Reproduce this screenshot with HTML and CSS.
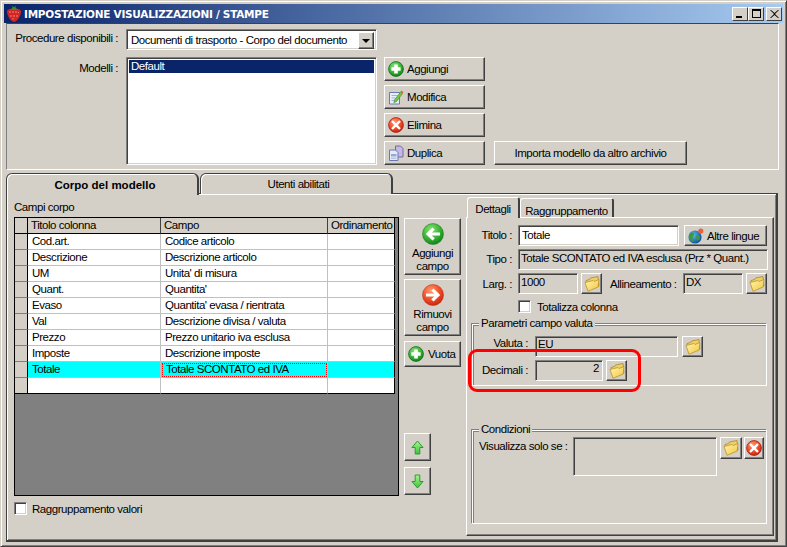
FILE: index.html
```html
<!DOCTYPE html>
<html lang="it">
<head>
<meta charset="utf-8">
<title>Impostazione visualizzazioni / stampe</title>
<link rel="stylesheet" href="styles.css">
</head>
<body>
<svg class="defs" width="0" height="0" aria-hidden="true">
  <defs>
    <radialGradient id="gg" cx="40%" cy="30%" r="75%"><stop offset="0" stop-color="#8fe07a"/><stop offset=".6" stop-color="#35b030"/><stop offset="1" stop-color="#0f7a1c"/></radialGradient>
    <radialGradient id="rg" cx="40%" cy="30%" r="75%"><stop offset="0" stop-color="#ff9a70"/><stop offset=".6" stop-color="#ee4a25"/><stop offset="1" stop-color="#c0200f"/></radialGradient>
    <linearGradient id="fg" x1="0" y1="0" x2="1" y2="1"><stop offset="0" stop-color="#fff6b0"/><stop offset="1" stop-color="#f2c63c"/></linearGradient>
    <linearGradient id="ag" x1="0" y1="0" x2="0" y2="1"><stop offset="0" stop-color="#a8f48c"/><stop offset="1" stop-color="#3cc43c"/></linearGradient>
    <radialGradient id="bg" cx="35%" cy="35%" r="70%"><stop offset="0" stop-color="#5cc0e8"/><stop offset="1" stop-color="#0d4f9a"/></radialGradient>
    <symbol id="i-plus" viewBox="0 0 16 16"><circle cx="8" cy="8" r="7.4" fill="url(#gg)" stroke="#0c6e1a" stroke-width=".8"/><path d="M6.2 3.4h3.6v2.8h2.8v3.6H9.8v2.8H6.2V9.8H3.4V6.2h2.8z" fill="#fff"/></symbol>
    <symbol id="i-x" viewBox="0 0 16 16"><circle cx="8" cy="8" r="7.4" fill="url(#rg)" stroke="#a81c10" stroke-width=".8"/><path d="M4.8 3.2 8 6.2l3.2-3 1.6 1.6-3 3.2 3 3.2-1.6 1.6-3.2-3-3.2 3-1.6-1.6 3-3.2-3-3.2z" fill="#fff"/></symbol>
    <symbol id="i-edit" viewBox="0 0 16 16"><path d="M1.5 3.5h10v11.5h-10z" fill="#e8eefa" stroke="#6a78b0"/><path d="M3.5 6.5h6M3.5 9h4M3.5 11.5h5" stroke="#a4b0d4"/><path d="m6.5 11 6-8 2 1.6-6 8-2.6 1z" fill="#6fc840" stroke="#3c8a28" stroke-width=".6"/><path d="m12.500 3 1-1.400 2 1.600-1 1.400z" fill="#e85a3a"/></symbol>
    <symbol id="i-copy" viewBox="0 0 16 16"><path d="M7.500 1h5l2.500 2.500V12H7.500z" fill="#c4b8e4" stroke="#7468a8"/><path d="M1.500 5h6l2.500 2.500v8H1.500z" fill="#e4eaf8" stroke="#6a78b0"/><path d="M3 9h5.500v2.500H3z" fill="#98a8d4"/><path d="M3 12.500h5.500v1.500H3z" fill="#b8c4e4"/></symbol>
    <symbol id="i-folder" viewBox="0 0 16 16"><path d="M2 7V4.500L5.500 3.500 6.500 2l7.500-1.500 1 9.500L4 14z" fill="#ecd06c" stroke="#a87a18" stroke-width=".7"/><path d="M4 15.300 1 6.500 9 4.500l1 1 5-2-.8 7.500z" fill="url(#fg)" stroke="#b88a20" stroke-width=".7"/></symbol>
    <symbol id="i-left" viewBox="0 0 22 22"><circle cx="11" cy="11" r="10.500" fill="url(#gg)" stroke="#1c8a22" stroke-width=".6"/><path d="M10.500 4.500 12.800 6.800 9.800 9.400H18v3.200H9.800l3 2.600-2.300 2.300L3.800 11z" fill="#fff"/></symbol>
    <symbol id="i-right" viewBox="0 0 22 22"><circle cx="11" cy="11" r="10.500" fill="url(#rg)" stroke="#c8341a" stroke-width=".6"/><path d="M11.500 4.500 9.200 6.800l3 2.600H4v3.200h8.200l-3 2.600 2.300 2.300 6.700-6.500z" fill="#fff"/></symbol>
    <symbol id="i-up" viewBox="0 0 14 16"><path d="M7 1 13 8H9.500v7h-5V8H1z" fill="url(#ag)" stroke="#24962c"/></symbol>
    <symbol id="i-down" viewBox="0 0 14 16"><path d="M7 15 13 8H9.500V1h-5v7H1z" fill="url(#ag)" stroke="#24962c"/></symbol>
    <symbol id="i-globe" viewBox="0 0 16 16"><circle cx="7" cy="9" r="6.600" fill="url(#bg)"/><path d="M3 5c2-1 3 0 3 1.500S4 9 4.500 11 6 14 5 14 1.500 11.500 1 9 2 6 3 5zM9 7c2 0 3 1 3 3s-2 3-3 2-1-4 0-5z" fill="#3c9a3c"/><circle cx="12.800" cy="3" r="2.600" fill="#e8603c"/></symbol>
    <symbol id="i-berry" viewBox="0 0 14 17"><path d="M0 6.500C0 4.500 3 3.500 7 3.500s7 1 7 3c0 4-3.500 10-7 10.500C3.500 16.500 0 10.500 0 6.500z" fill="#d42424"/><path d="M3 6v2M6 6v2M9 6v2M11.500 7v1M4 10v2M7 10v2M10 10v2M6 13v1.500" stroke="#f4a090" stroke-width=".8"/><path d="M3 4.500 5.500 3 5 .8 7 2.200 9 .8 8.500 3l2.500 1.500-4 .8z" fill="#3f8a2c"/></symbol>
  </defs>
</svg>

<div class="window">
  <header class="titlebar">
    <svg class="berry"><use href="#i-berry"/></svg>
    <span class="title">IMPOSTAZIONE VISUALIZZAZIONI / STAMPE</span>
    <div class="winbtns">
      <span class="winbtn"><i class="g-min"></i></span><span class="winbtn"><i class="g-max"></i></span><span class="winbtn gap"><svg width="9" height="8" viewBox="0 0 9 8"><path d="M1 0 4.500 3 8 0h1L5 4l4 4H8L4.500 5 1 8H0l4-4-4-4z" fill="#000"/></svg></span>
    </div>
  </header>

  <section class="top">
    <div class="top-row">
      <label class="top-label">Procedure disponibili :</label>
      <div class="combo sunk"><span class="combo-text">Documenti di trasporto - Corpo del documento</span><span class="combo-btn bevel"><i class="arrow"></i></span></div>
    </div>
    <div class="top-row models">
      <label class="top-label">Modelli :</label>
      <div class="listbox sunk"><div class="list-sel">Default</div></div>
      <div class="btn-col">
        <button class="bevel act"><svg class="ic16"><use href="#i-plus"/></svg>Aggiungi</button>
        <button class="bevel act"><svg class="ic16"><use href="#i-edit"/></svg>Modifica</button>
        <button class="bevel act"><svg class="ic16"><use href="#i-x"/></svg>Elimina</button>
        <button class="bevel act"><svg class="ic16"><use href="#i-copy"/></svg>Duplica</button>
      </div>
      <button class="bevel importa">Importa modello da altro archivio</button>
    </div>
  </section>

  <nav class="tabs">
    <span class="tab active">Corpo del modello</span>
    <span class="tab">Utenti abilitati</span>
  </nav>

  <section class="page">
    <div class="left">
      <div class="caption">Campi corpo</div>
      <div class="gridbox">
        <table class="grid">
          <colgroup><col class="c0"><col class="c1"><col class="c2"><col class="c3"></colgroup>
          <thead><tr><th></th><th>Titolo colonna</th><th>Campo</th><th>Ordinamento</th></tr></thead>
          <tbody>
            <tr><th></th><td>Cod.art.</td><td>Codice articolo</td><td></td></tr>
            <tr><th></th><td>Descrizione</td><td>Descrizione articolo</td><td></td></tr>
            <tr><th></th><td>UM</td><td>Unita' di misura</td><td></td></tr>
            <tr><th></th><td>Quant.</td><td>Quantita'</td><td></td></tr>
            <tr><th></th><td>Evaso</td><td>Quantita' evasa / rientrata</td><td></td></tr>
            <tr><th></th><td>Val</td><td>Descrizione divisa / valuta</td><td></td></tr>
            <tr><th></th><td>Prezzo</td><td>Prezzo unitario iva esclusa</td><td></td></tr>
            <tr><th></th><td>Imposte</td><td>Descrizione imposte</td><td></td></tr>
            <tr class="current"><th></th><td>Totale</td><td class="focus">Totale SCONTATO ed IVA</td><td></td></tr>
            <tr class="last"><th></th><td></td><td></td><td></td></tr>
          </tbody>
        </table>
      </div>
      <div class="check-row"><span class="check sunk"></span><span>Raggruppamento valori</span></div>
    </div>

    <div class="mid">
      <button class="bevel tall"><svg class="ic22"><use href="#i-left"/></svg><span>Aggiungi<br>campo</span></button>
      <button class="bevel tall"><svg class="ic22"><use href="#i-right"/></svg><span>Rimuovi<br>campo</span></button>
      <button class="bevel vuota"><svg class="ic16"><use href="#i-plus"/></svg>Vuota</button>
      <button class="bevel move first"><svg class="ic-arrow"><use href="#i-up"/></svg></button>
      <button class="bevel move"><svg class="ic-arrow"><use href="#i-down"/></svg></button>
    </div>

    <div class="right">
      <nav class="subtabs">
        <span class="subtab active">Dettagli</span>
        <span class="subtab">Raggruppamento</span>
      </nav>
      <div class="panel">
        <div class="row">
          <label class="lbl t3">Titolo :</label>
          <div class="field sunk white w-titolo">Totale</div>
          <button class="bevel altre"><svg class="ic16"><use href="#i-globe"/></svg>Altre lingue</button>
        </div>
        <div class="row">
          <label class="lbl t3">Tipo :</label>
          <div class="field sunk w-tipo">Totale SCONTATO ed IVA esclusa (Prz * Quant.)</div>
        </div>
        <div class="row">
          <label class="lbl">Larg. :</label>
          <div class="field sunk w-60">1000</div>
          <button class="bevel fold"><svg class="ic16"><use href="#i-folder"/></svg></button>
          <label class="lbl-all">Allineamento :</label>
          <div class="field sunk w-60">DX</div>
          <button class="bevel fold"><svg class="ic16"><use href="#i-folder"/></svg></button>
        </div>
        <div class="check-row tot"><span class="check sunk"></span><span>Totalizza colonna</span></div>

        <fieldset class="group g-valuta">
          <legend>Parametri campo valuta</legend>
          <div class="row">
            <label class="lbl-g t0">Valuta :</label>
            <div class="field sunk w-valuta flat">EU</div>
            <button class="bevel fold f5"><svg class="ic16"><use href="#i-folder"/></svg></button>
          </div>
          <div class="row">
            <label class="lbl-g">Decimali :</label>
            <div class="field sunk w-dec num flat">2</div>
            <button class="bevel fold"><svg class="ic16"><use href="#i-folder"/></svg></button>
          </div>
        </fieldset>

        <fieldset class="group g-cond">
          <legend>Condizioni</legend>
          <div class="cond">
            <label class="lbl-c">Visualizza solo se :</label>
            <div class="field sunk w-cond"></div>
            <button class="bevel fold f22"><svg class="ic16"><use href="#i-folder"/></svg></button>
            <button class="bevel fold f20"><svg class="ic16"><use href="#i-x"/></svg></button>
          </div>
        </fieldset>

        <div class="highlight"></div>
      </div>
    </div>
  </section>
</div>
</body>
</html>
```

FILE: styles.css
```css
* { box-sizing: border-box; }
html, body { margin: 0; padding: 0; background: #d4d0c8; }
body { font: 11.500px/14px "Liberation Sans", Arial, sans-serif; letter-spacing: -.45px; color: #000; overflow: hidden; }
.defs { position: absolute; }
i { display: block; }

.window {
  width: 787px; height: 547px; padding: 3px;
  background: #d4d0c8; display: flex; flex-direction: column;
  border: 1px solid; border-color: #d4d0c8 #404040 #404040 #d4d0c8;
  box-shadow: inset 1px 1px 0 #fff, inset -1px -1px 0 #808080;
}

/* title bar */
.titlebar {
  height: 19px; flex: none; display: flex; align-items: center;
  background: linear-gradient(90deg, #0a246a, #a6caf0); color: #fff;
}
.berry { width: 14px; height: 17px; margin-left: 3px; flex: none; }
.title { margin-left: 3px; font: bold 10.500px/14px "DejaVu Sans", sans-serif; letter-spacing: -.27px; white-space: nowrap; }
.winbtns { margin-left: auto; margin-right: 1px; display: flex; }
.winbtn {
  width: 16px; height: 14px; background: #d4d0c8; display: flex;
  align-items: center; justify-content: center;
  border-top: 1px solid #fff; border-left: 1px solid #fff;
  border-right: 1px solid #404040; border-bottom: 1px solid #404040;
}
.winbtn.gap { margin-left: 2px; }
.g-min { width: 6px; height: 2px; background: #000; margin-top: 6px; margin-right: 2px; }
.g-max { width: 9px; height: 9px; border: 1px solid #000; border-top-width: 2px; }

/* bevels */
.bevel {
  background: #d4d0c8; padding: 0; font: inherit; letter-spacing: inherit; color: #000;
  border-style: solid; border-width: 1px;
  border-color: #fff #404040 #404040 #fff;
  box-shadow: inset -1px -1px 0 #808080;
}
.sunk {
  border-style: solid; border-width: 1px;
  border-color: #808080 #fff #fff #808080;
  box-shadow: inset 1px 1px 0 #404040, inset -1px -1px 0 #d4d0c8;
}

/* top panel */
.top {
  width: 773px; height: 147px; margin-left: 2px; flex: none; padding: 5px 0 0 7px;
  border: 1px solid; border-color: #404040 #fff #fff #808080;
}
.top-row { display: flex; align-items: flex-start; }
.top-label { width: 104px; margin-right: 8px; text-align: right; padding-top: 2px; flex: none; white-space: nowrap; }
.models { margin-top: 7px; }
.models .top-label { padding-top: 4px; }
.combo { width: 251px; height: 21px; background: #fff; display: flex; padding: 2px; }
.combo-text { flex: 1; padding: 1px 0 0 2px; white-space: nowrap; }
.combo-btn { width: 16px; height: 17px; display: flex; align-items: center; justify-content: center; }
.arrow { width: 0; height: 0; border: 4px solid transparent; border-top: 4px solid #000; border-bottom: 0; }
.listbox { width: 251px; height: 108px; background: #fff; padding: 2px; }
.list-sel { background: #0a246a; color: #fff; height: 13px; line-height: 13px; padding-left: 2px; }
.btn-col { margin-left: 7px; width: 101px; display: flex; flex-direction: column; gap: 4px; flex: none; }
.act { height: 24px; width: 101px; display: flex; align-items: center; padding: 0 0 0 3px; text-align: left; }
.ic16 { width: 16px; height: 16px; flex: none; }
.act .ic16 { margin-right: 3px; }
.importa { width: 193px; height: 24px; margin: 84px 0 0 9px; flex: none; }

/* tabs */
.tabs { height: 21px; margin: 3px 0 0 2px; display: flex; flex: none; position: relative; z-index: 1; }
.tab {
  width: 193px; height: 21px; text-align: center; padding: 3px 0 0 5px;
  border: 1px solid #404040; border-bottom: 0; border-right-width: 2px;
  border-radius: 6px 6px 0 0; box-shadow: inset 1px 1px 0 #fff; background: #d4d0c8;
}
.tab.active { height: 22px; font-weight: bold; letter-spacing: 0; padding: 4px 0 0 6px; }
.tab + .tab { margin-left: 1px; }

/* page */
.page {
  width: 772px; height: 349px; margin-left: 2px; margin-top: -1px; flex: none; display: flex;
  padding: 3px 0 0 7px; background: #d4d0c8;
  border: 1px solid #404040; border-right-width: 2px; border-bottom-width: 2px;
  box-shadow: inset 1px 1px 0 #fff, inset -1px -1px 0 #808080;
}
.left { width: 385px; flex: none; }
.caption { height: 14px; margin: 3px 0; }
.gridbox { width: 385px; height: 279px; background: #808080; border: 1px solid #000; }
.grid { width: 380px; table-layout: fixed; border-collapse: separate; border-spacing: 0; background: #fff; }
.c0 { width: 13px; } .c1 { width: 133px; } .c2 { width: 167px; } .c3 { width: 67px; }
.grid th, .grid td {
  height: 16px; padding: 0 0 0 4px; font-weight: normal; text-align: left; line-height: 15px; white-space: nowrap;
  overflow: hidden; border-right: 1px solid #c0c0c0; border-bottom: 1px solid #c0c0c0;
}
.grid thead th { background: #d4d0c8; border-bottom-color: #000; border-right-color: #404040; padding-left: 3px; }
.grid th:first-child { background: #d4d0c8; border-right: 1px solid #000; padding: 0; }
.grid td:last-child, .grid thead th:last-child { border-right-color: #000; }
.grid tbody th { border-bottom-color: #808080; }
.grid .last th, .grid .last td { border-bottom-color: #000; }
.current td { background: #00ffff; }
.grid .focus { outline: 1px dotted #ff0000; outline-offset: -2px; padding-left: 5px; }
.check-row { display: flex; align-items: center; margin-top: 6px; height: 13px; }
.check { width: 13px; height: 13px; background: #fff; margin-right: 5px; flex: none; }

/* middle buttons */
.mid { width: 57px; margin: 21px 0 0 5px; flex: none; display: flex; flex-direction: column; align-items: flex-start; }
.tall { width: 57px; height: 57px; margin-bottom: 4px; display: flex; flex-direction: column; align-items: center; padding-top: 4px; line-height: 13px; }
.tall span { display: block; margin-top: 2px; }
.ic22 { width: 22px; height: 22px; flex: none; }
.vuota { width: 57px; height: 26px; margin-top: 1px; display: flex; align-items: center; padding-left: 3px; }
.vuota .ic16 { margin-right: 4px; }
.move { width: 27px; height: 28px; margin-top: 6px; display: flex; align-items: center; justify-content: center; }
.move.first { margin-top: 66px; }
.ic-arrow { width: 13px; height: 15px; }

/* right */
.right { width: 308px; margin-left: 5px; flex: none; }
.subtabs { height: 20px; display: flex; position: relative; z-index: 1; padding-left: 1px; }
.subtab {
  width: 94px; height: 19px; margin-top: 1px; padding-top: 5px; text-align: center; border-top: 1px solid #fff; border-left: 1px solid #fff;
  border-right: 2px solid #404040; border-radius: 3px 3px 0 0; background: #d4d0c8; white-space: nowrap;
}
.subtab.active { width: 53px; height: 21px; margin-top: 0; padding-top: 4px; }
.panel {
  position: relative; width: 308px; height: 319px; padding: 7px 0 0 5px;
  border-top: 1px solid #fff; border-left: 1px solid #fff;
  border-right: 1px solid #404040; border-bottom: 1px solid #404040;
  box-shadow: inset -1px -1px 0 #808080;
}
.row { display: flex; align-items: flex-start; height: 21px; margin-bottom: 3px; }
.lbl { width: 40px; margin-right: 6px; text-align: right; padding-top: 4px; flex: none; white-space: nowrap; }
.lbl.t3 { padding-top: 3px; }
.lbl-all { width: 67px; margin: 0 6px 0 8px; padding-top: 4px; white-space: nowrap; flex: none; }
.field { height: 21px; padding: 1px 0 0 2px; flex: none; line-height: 14px; white-space: nowrap; overflow: hidden; }
.flat { padding-top: 0; }
.white { background: #fff; padding-top: 2px; }
.w-titolo { width: 161px; padding-left: 3px; }
.w-tipo { width: 250px; }
.w-60 { width: 60px; }
.w-valuta { width: 143px; }
.w-dec { width: 68px; }
.w-cond { width: 144px; height: 39px; }
.num { text-align: right; padding-right: 3px; }
.altre { width: 83px; height: 21px; margin-left: 5px; display: flex; align-items: center; padding-left: 3px; white-space: nowrap; }
.altre .ic16 { margin-right: 3px; }
.fold { width: 21px; height: 21px; margin-left: 3px; display: flex; align-items: center; justify-content: center; flex: none; }
.f5 { margin-left: 4px; }
.f22 { width: 22px; height: 22px; margin-left: 3px; }
.f20 { width: 20px; height: 22px; margin-left: 2px; }
.tot { margin: 6px 0 0 46px; }
.tot .check { margin-right: 6px; }

.group {
  margin: 0; padding: 0; width: 295px; min-width: 0; position: relative;
  border: 1px solid #fff; box-shadow: inset 1px 1px 0 #808080, -1px -1px 0 #808080;
}
.group legend { padding: 0 2px; margin-left: 6px; line-height: 14px; position: absolute; top: -9px; left: 0; background: #d4d0c8; white-space: nowrap; }
.g-valuta { height: 62px; margin-top: 11px; padding: 11px 0 0 0; }
.lbl-g { width: 55px; margin-right: 7px; text-align: right; padding-top: 3px; flex: none; white-space: nowrap; }
.lbl-g.t0 { padding-top: 0; }
.g-cond { height: 94px; margin-top: 44px; padding: 6px 0 0 6px; }
.cond { display: flex; align-items: flex-start; }
.lbl-c { width: 89px; margin-right: 5px; flex: none; white-space: nowrap; padding-top: 2px; }

.highlight {
  position: absolute; left: 1px; top: 131px; width: 173px; height: 43px;
  border: 3px solid #ff0000; border-radius: 9px; pointer-events: none;
}
```
